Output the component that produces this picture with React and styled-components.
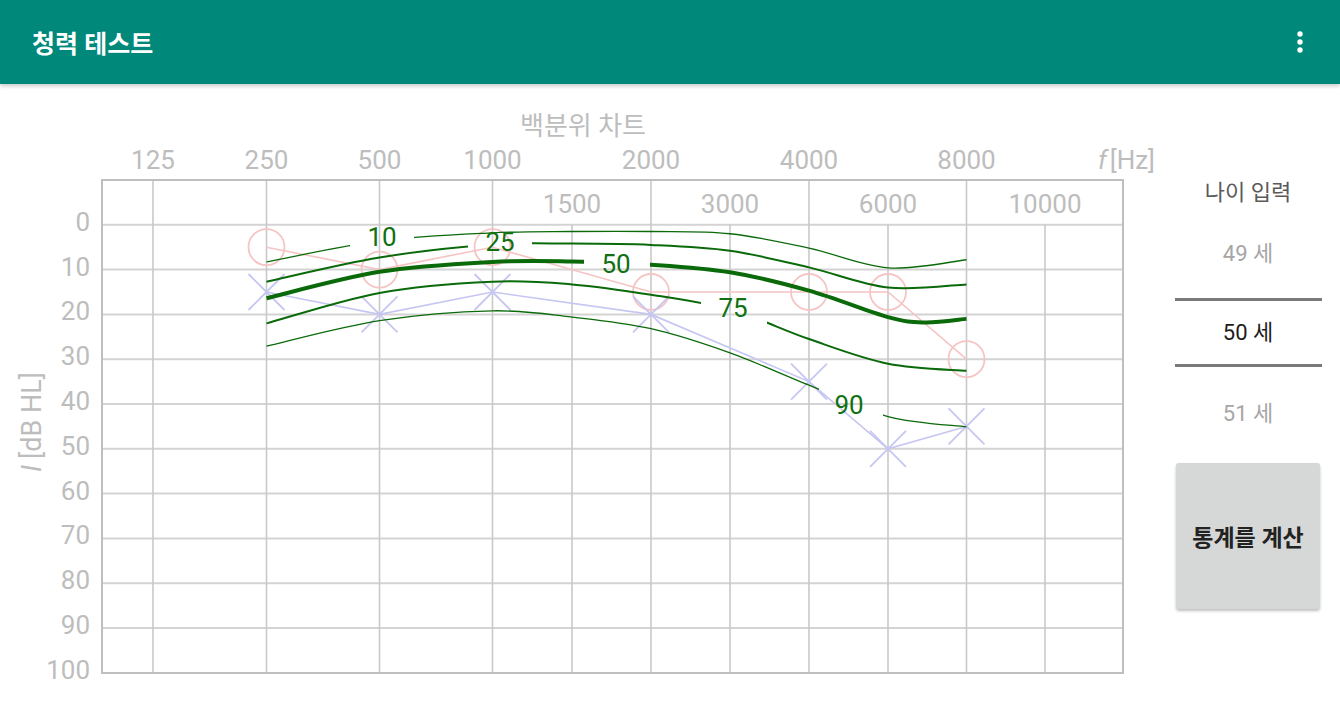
import React from "react";
import styled, { createGlobalStyle } from "styled-components";

const GlobalStyle = createGlobalStyle`
  html, body {
    margin: 0;
    padding: 0;
    background: #fff;
  }
  body {
    font-family: Roboto, "Noto Sans CJK KR", sans-serif;
  }
`;

const Page = styled.div`
  width: 1340px;
  height: 705px;
  display: flex;
  flex-direction: column;
  overflow: hidden;
`;

const AppBar = styled.header`
  height: 84px;
  flex-shrink: 0;
  box-sizing: border-box;
  padding: 0 28px 0 32px;
  display: flex;
  align-items: center;
  justify-content: space-between;
  background: #00897b;
  box-shadow: 0 2px 4px rgba(0, 0, 0, 0.22);
  position: relative;
  z-index: 1;
`;

const Title = styled.h1`
  margin: 0;
  color: #fff;
  font-family: Roboto, "Noto Sans CJK KR", sans-serif;
  font-size: 25px;
  font-weight: 700;
`;

const Main = styled.main`
  flex: 1;
  display: flex;
  border-bottom: 2px solid #f3f3f3;
`;

const ChartArea = styled.section`
  width: 1156px;
  flex-shrink: 0;
`;

const Sidebar = styled.aside`
  flex: 1;
  display: flex;
  flex-direction: column;
  align-items: center;
  padding-top: 96px;
`;

const SideTitle = styled.div`
  font-size: 22px;
  line-height: 26px;
  color: #5a5a5a;
`;

const Picker = styled.div`
  margin-top: 23px;
  display: flex;
  flex-direction: column;
  align-items: center;
`;

const PickerItem = styled.div`
  width: 147px;
  text-align: center;
  font-size: 22px;
  height: ${(p) => (p.$selected ? "63px" : "50px")};
  line-height: ${(p) => (p.$selected ? "63px" : "50px")};
  color: ${(p) => (p.$selected ? "#1c1c1c" : "#a6a6a6")};
  border-top: ${(p) => (p.$selected ? "3px solid #7a7a7a" : "none")};
  border-bottom: ${(p) => (p.$selected ? "3px solid #7a7a7a" : "none")};
  margin-top: ${(p) => p.$gap || 0}px;
`;

const CalcButton = styled.button`
  margin-top: 24px;
  width: 144px;
  height: 146px;
  padding: 0;
  border: none;
  border-radius: 3px;
  background: #d6d7d7;
  box-shadow: 0 2px 3px rgba(0, 0, 0, 0.25);
  font-family: Roboto, "Noto Sans CJK KR", sans-serif;
  font-size: 23px;
  font-weight: 700;
  color: #222;
`;

const AxisText = styled.text`
  font-family: Roboto, "Noto Sans CJK KR", sans-serif;
  font-size: ${(p) => p.$size || 26}px;
  fill: #bdbdbd;
`;

const CurveLabel = styled.text`
  font-family: Roboto, sans-serif;
  font-size: 26px;
  fill: #117011;
`;

const GREEN = "#0a6a0a";
const RED = "#f5c4c4";
const BLUE = "#c6c6f2";

const X = {
  125: 153,
  250: 266.5,
  500: 379.5,
  1000: 492.5,
  1500: 572,
  2000: 651,
  3000: 730,
  4000: 809,
  6000: 888,
  8000: 966.5,
  10000: 1045,
};
const Y = (db) => 224.8 + db * 4.48;

const LEFT = 102;
const RIGHT = 1123;
const TOP = 180;
const BOTTOM = 673;

const octaves = [125, 250, 500, 1000, 2000, 4000, 8000];
const halves = [1500, 3000, 6000, 10000];
const levels = [0, 10, 20, 30, 40, 50, 60, 70, 80, 90, 100];

const rightEar = [[250, 5], [500, 10], [1000, 5], [2000, 15], [4000, 15], [6000, 15], [8000, 30]];
const leftEar = [[250, 15], [500, 20], [1000, 15], [2000, 20], [4000, 35], [6000, 50], [8000, 45]];

const percentiles = [
  {
    name: "10", width: 1.3, gap: [350, 414], label: [382, 237],
    pts: [[266.5, 8.3], [379.5, 3.6], [492.5, 1.8], [572, 1.5], [651, 1.5], [730, 2.0], [809, 5.2], [888, 9.6], [966.5, 7.8]],
  },
  {
    name: "25", width: 2, gap: [468, 532], label: [500, 242],
    pts: [[266.5, 12.7], [379.5, 7.3], [492.5, 4.4], [572, 4.2], [651, 4.5], [730, 5.8], [809, 9.5], [888, 14.0], [966.5, 13.3]],
  },
  {
    name: "50", width: 4, gap: [584, 650], label: [616, 264],
    pts: [[266.5, 16.4], [379.5, 10.5], [492.5, 8.3], [572, 8.2], [651, 8.9], [730, 10.6], [809, 14.7], [888, 20.6], [925, 21.8], [966.5, 21]],
  },
  {
    name: "75", width: 2, gap: [701, 767], label: [733, 308],
    pts: [[266.5, 22], [379.5, 15.2], [492.5, 12.7], [572, 13.3], [651, 15.6], [730, 18.9], [809, 25.5], [888, 31.0], [966.5, 32.6]],
  },
  {
    name: "90", width: 1.3, gap: [819, 883], label: [849, 405],
    pts: [[266.5, 27.1], [379.5, 21.4], [492.5, 19.2], [572, 20.6], [651, 23.2], [730, 28.6], [809, 35.8], [888, 42.8], [966.5, 45.1]],
  },
];

// catmull-rom through the points, as cubic beziers
function smoothPath(points) {
  const p = points.map(([x, db]) => [x, Y(db)]);
  let d = `M${p[0][0]},${p[0][1]}`;
  for (let i = 1; i < p.length; i++) {
    const p0 = p[i - 2] || p[i - 1];
    const p1 = p[i - 1];
    const p2 = p[i];
    const p3 = p[i + 1] || p[i];
    const c1x = p1[0] + (p2[0] - p0[0]) / 6;
    const c1y = p1[1] + (p2[1] - p0[1]) / 6;
    const c2x = p2[0] - (p3[0] - p1[0]) / 6;
    const c2y = p2[1] - (p3[1] - p1[1]) / 6;
    d += ` C${c1x},${c1y} ${c2x},${c2y} ${p2[0]},${p2[1]}`;
  }
  return d;
}

function MenuIcon() {
  return (
    <svg width="24" height="24" viewBox="0 0 24 24">
      <circle cx="12" cy="4" r="2.7" fill="#fff" />
      <circle cx="12" cy="12" r="2.7" fill="#fff" />
      <circle cx="12" cy="20" r="2.7" fill="#fff" />
    </svg>
  );
}

function Audiogram() {
  const line = (pts) => pts.map(([f, db]) => `${X[f]},${Y(db)}`).join(" ");
  return (
    <svg width="1156" height="619" viewBox="0 84 1156 619">
      <defs>
        {percentiles.map((c) => (
          <clipPath key={c.name} id={`gap-${c.name}`}>
            <rect x="0" y="84" width={c.gap[0]} height="620" />
            <rect x={c.gap[1]} y="84" width={1156 - c.gap[1]} height="620" />
          </clipPath>
        ))}
      </defs>

      <AxisText x="583" y="135" textAnchor="middle" $size={26}>백분위 차트</AxisText>
      {octaves.map((f) => (
        <AxisText key={f} x={X[f]} y="169" textAnchor="middle">{f}</AxisText>
      ))}
      {halves.map((f) => (
        <AxisText key={f} x={X[f]} y="213" textAnchor="middle">{f}</AxisText>
      ))}
      <AxisText x="1155" y="169" textAnchor="end">
        <tspan fontStyle="italic">f</tspan>
        <tspan dx="3">[Hz]</tspan>
      </AxisText>
      {levels.map((l) => (
        <AxisText key={l} x="90" y={Y(l) + 6} textAnchor="end">{l}</AxisText>
      ))}
      <AxisText x="0" y="0" textAnchor="middle" $size={27} transform="translate(41 422) rotate(-90)">
        <tspan fontStyle="italic">I</tspan>
        <tspan dx="6">[dB HL]</tspan>
      </AxisText>

      <g stroke="#d3d3d3" strokeWidth="2">
        {levels.slice(0, 10).map((l) => (
          <line key={l} x1={LEFT} x2={RIGHT} y1={Y(l)} y2={Y(l)} />
        ))}
      </g>
      <g stroke="#c9c9c9" strokeWidth="1.6">
        {octaves.map((f) => (
          <line key={f} x1={X[f]} x2={X[f]} y1={TOP} y2={BOTTOM} />
        ))}
        {halves.map((f) => (
          <line key={f} x1={X[f]} x2={X[f]} y1={Y(0)} y2={BOTTOM} />
        ))}
      </g>
      <rect x={LEFT} y={TOP} width={RIGHT - LEFT} height={BOTTOM - TOP} fill="none" stroke="#bfbfbf" strokeWidth="2" />

      <polyline points={line(rightEar)} fill="none" stroke={RED} strokeWidth="1.6" />
      {rightEar.map(([f, db]) => (
        <circle key={f} cx={X[f]} cy={Y(db)} r="18" fill="none" stroke={RED} strokeWidth="1.8" />
      ))}
      <polyline points={line(leftEar)} fill="none" stroke={BLUE} strokeWidth="1.6" />
      {leftEar.map(([f, db]) => (
        <g key={f} stroke={BLUE} strokeWidth="1.8">
          <line x1={X[f] - 18} y1={Y(db) - 18} x2={X[f] + 18} y2={Y(db) + 18} />
          <line x1={X[f] - 18} y1={Y(db) + 18} x2={X[f] + 18} y2={Y(db) - 18} />
        </g>
      ))}

      {percentiles.map((c) => (
        <g key={c.name}>
          <path
            d={smoothPath(c.pts)}
            fill="none"
            stroke={GREEN}
            strokeWidth={c.width}
            clipPath={`url(#gap-${c.name})`}
          />
          <CurveLabel x={c.label[0]} y={c.label[1] + 9} textAnchor="middle">{c.name}</CurveLabel>
        </g>
      ))}
    </svg>
  );
}

export default function App() {
  return (
    <>
      <GlobalStyle />
      <Page>
        <AppBar>
          <Title>청력 테스트</Title>
          <MenuIcon />
        </AppBar>
        <Main>
          <ChartArea>
            <Audiogram />
          </ChartArea>
          <Sidebar>
            <SideTitle>나이 입력</SideTitle>
            <Picker>
              <PickerItem>49 세</PickerItem>
              <PickerItem $selected $gap={19}>50 세</PickerItem>
              <PickerItem $gap={22}>51 세</PickerItem>
            </Picker>
            <CalcButton>통계를 계산</CalcButton>
          </Sidebar>
        </Main>
      </Page>
    </>
  );
}
